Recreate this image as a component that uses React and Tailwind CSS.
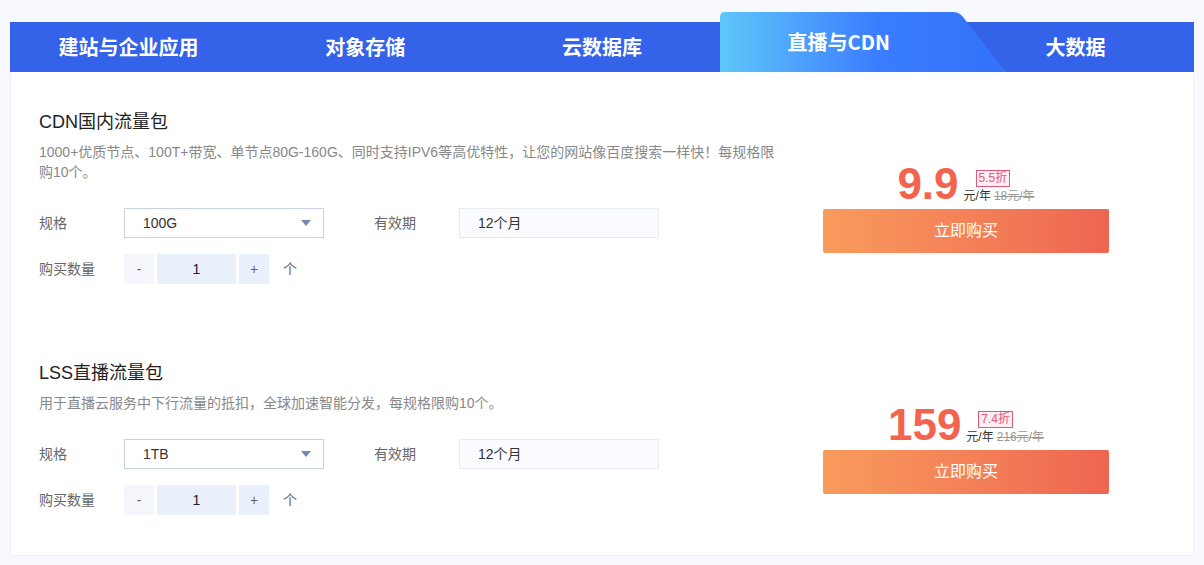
import { useState } from "react";

const tabs = ["建站与企业应用", "对象存储", "云数据库", "直播与CDN", "大数据"];

const products = [
  {
    title: "CDN国内流量包",
    desc: [
      "1000+优质节点、100T+带宽、单节点80G-160G、同时支持IPV6等高优特性，让您的网站像百度搜索一样快！每规格限",
      "购10个。",
    ],
    spec: "100G",
    price: "9.9",
    discount: "5.5折",
    original: "18元/年",
  },
  {
    title: "LSS直播流量包",
    desc: ["用于直播云服务中下行流量的抵扣，全球加速智能分发，每规格限购10个。"],
    spec: "1TB",
    price: "159",
    discount: "7.4折",
    original: "216元/年",
  },
];

const ActiveShape = () => (
  <svg
    className="absolute left-0 top-[-10px]"
    width="286"
    height="60"
    viewBox="0 0 286 60"
  >
    <defs>
      <linearGradient id="tabg" x1="0" y1="0" x2="1" y2="0">
        <stop offset="0%" stopColor="#5fc7f9" />
        <stop offset="55%" stopColor="#3b7dff" />
        <stop offset="100%" stopColor="#3272f8" />
      </linearGradient>
    </defs>
    <path d="M0 60 L0 5 Q0 0 5 0 L233 0 Q239 0 243 5 L286 60 Z" fill="url(#tabg)" />
  </svg>
);

const Product = ({ item, first }) => {
  const [count, setCount] = useState(1);
  return (
    <div className={`flex items-center ${first ? "" : "mt-[76px]"}`}>
      <div className="w-[745px]">
        <div className="text-[18px] leading-[26px] text-[#222]">{item.title}</div>
        <p className="mt-[7px] whitespace-nowrap text-[14px] leading-[20px] text-[#888]">
          {item.desc.map((line, i) => (
            <span key={i}>
              {i > 0 && <br />}
              {line}
            </span>
          ))}
        </p>
        <div className="mt-[26px] flex items-center text-[14px]">
          <span className="w-[85px] text-[#666]">规格</span>
          <div className="flex h-[30px] w-[200px] items-center justify-between border border-[#c9d1e4] bg-white pl-[18px] pr-[12px] text-[#333]">
            <span>{item.spec}</span>
            <svg width="10" height="6" viewBox="0 0 10 6">
              <path d="M0 0 H10 L5 6 Z" fill="#7686b5" />
            </svg>
          </div>
          <span className="ml-[50px] w-[85px] text-[#666]">有效期</span>
          <div className="flex h-[30px] w-[200px] items-center border border-[#e6ebf4] bg-[#fafbfe] pl-[18px] text-[#333]">
            12个月
          </div>
        </div>
        <div className="mt-[16px] flex items-center text-[14px]">
          <span className="w-[85px] text-[#666]">购买数量</span>
          <button
            className="h-[30px] w-[30px] bg-[#f4f6fb] text-[#666]"
            onClick={() => setCount(Math.max(1, count - 1))}
          >
            -
          </button>
          <div className="ml-[3px] flex h-[30px] w-[79px] items-center justify-center bg-[#e9effb] text-[#222]">
            {count}
          </div>
          <button
            className="ml-[3px] h-[30px] w-[30px] bg-[#e9effb] text-[#666]"
            onClick={() => setCount(Math.min(10, count + 1))}
          >
            +
          </button>
          <span className="ml-[14px] text-[#666]">个</span>
        </div>
      </div>
      <div className="ml-[39px] flex w-[286px] flex-col items-center pt-[22px]">
        <div className="flex h-[44px] items-center">
          <span className="font-['Liberation_Sans',sans-serif] text-[44px] font-bold leading-[44px] text-[#f4634e]">
            {item.price}
          </span>
          <div className="ml-[5px] mt-[6px] flex flex-col text-[12px] leading-[16px]">
            <span className="ml-[12px] w-fit border border-[#e5577a] bg-[#fdeef2] px-[2px] leading-[15px] text-[#e5577a]">
              {item.discount}
            </span>
            <span className="mt-[1px] whitespace-nowrap">
              <span className="text-[#333]">元/年</span>
              <span className="ml-[3px] text-[#999] line-through">{item.original}</span>
            </span>
          </div>
        </div>
        <button className="mt-[3px] h-[44px] w-[286px] rounded-[2px] bg-gradient-to-r from-[#f99b5d] to-[#ee6551] text-[16px] text-white">
          立即购买
        </button>
      </div>
    </div>
  );
};

export default function App() {
  return (
    <div className="min-h-screen bg-[#f7f9fe] px-[10px] pt-[22px] font-['Liberation_Sans','Noto_Sans_CJK_SC',sans-serif]">
      <div className="flex h-[50px] bg-[#3462e9] font-['Noto_Sans_CJK_SC',sans-serif]">
        {tabs.map((t, i) => (
          <div key={t} className="relative flex flex-1 items-center justify-center">
            {i === 3 && <ActiveShape />}
            <span
              className={`relative text-[20px] font-bold text-white ${
                i === 3 ? "-translate-y-[5px]" : ""
              }`}
            >
              {t}
            </span>
          </div>
        ))}
      </div>
      <div className="border border-t-0 border-[#edf0f6] bg-white px-[28px] pb-[40px] pt-[37px]">
        {products.map((p, i) => (
          <Product key={p.title} item={p} first={i === 0} />
        ))}
      </div>
    </div>
  );
}
